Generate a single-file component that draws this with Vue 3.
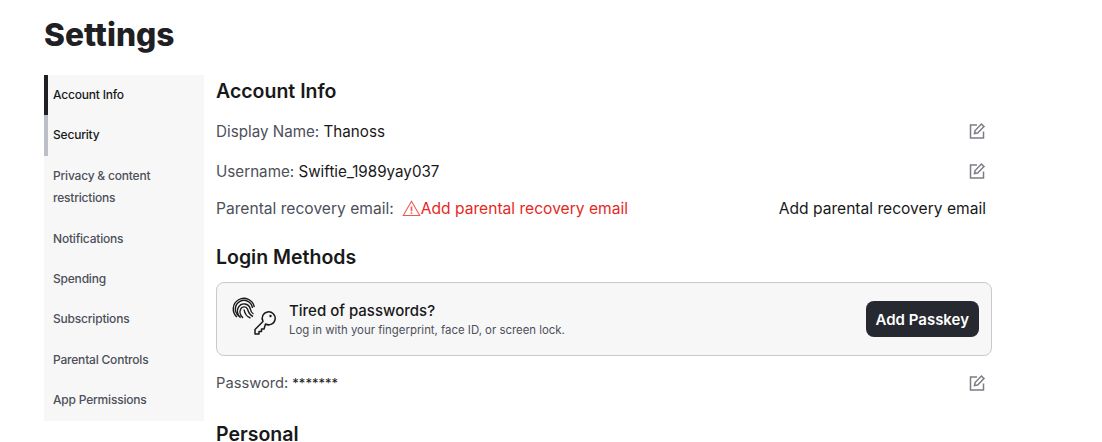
<template>
  <div class="page">
    <h1>Settings</h1>
    <div class="layout">
      <ul class="side-menu">
        <li
          v-for="item of menu"
          :key="item"
          :class="{ active: item === 'Account Info', hovered: item === 'Security' }"
        >
          {{ item }}
        </li>
      </ul>

      <div class="content">
        <h2 class="account-title">Account Info</h2>
        <div class="row">
          <span><span class="label">Display Name:</span> Thanoss</span>
          <svg class="edit" viewBox="0 0 18 18"><path d="M9 3H2.5v13h13V9.5" /><path d="M6.5 11.5l.6-3L13.4 2l2.6 2.6-6.4 6.4z" /></svg>
        </div>
        <div class="row">
          <span><span class="label">Username:</span> Swiftie_1989yay037</span>
          <svg class="edit" viewBox="0 0 18 18"><path d="M9 3H2.5v13h13V9.5" /><path d="M6.5 11.5l.6-3L13.4 2l2.6 2.6-6.4 6.4z" /></svg>
        </div>
        <div class="row email-row">
          <span class="email-left">
            <span class="label">Parental recovery email:</span>
            <span class="warn">
              <svg viewBox="0 0 18 18"><path d="M9 2.2L1.2 15.6h15.6z" /><path class="warn-mark" d="M9 7v4.6M9 12.6v1.4" /></svg>
              Add parental recovery email
            </span>
          </span>
          <span class="add-link">Add parental recovery email</span>
        </div>

        <h2 class="login-title">Login Methods</h2>
        <div class="passkey">
          <svg class="passkey-icon" viewBox="0 0 46 42">
            <g transform="translate(0 -2)">
              <g class="print">
                <path d="M5 21A10.6 10.6 0 1 1 22.3 11" />
                <path d="M7 20A8.6 8.6 0 1 1 20.5 12" />
                <path d="M8.6 21.6C5 19 4.500 14 6.600 11A6.400 6.400 0 0 1 18.200 12.500c.3 2 .8 4 3.300 5.500" />
                <path d="M11 22C7.500 19 7.500 15 9 12.500a3.800 3.800 0 0 1 6.600.7c.8 3 2 5.800 5.400 7.300" />
                <path d="M12 13.500c.6 3.500 2.500 7 6.500 8.500" />
              </g>
              <path class="key" d="M31 25.500L23 33.500V38H27V35.500H29.500V33H32L33.500 28A6.500 6.500 0 1 0 31 25.500z" />
              <circle class="key-hole" cx="38.500" cy="20" r="1.200" />
            </g>
          </svg>
          <div class="passkey-text">
            <div class="passkey-title">Tired of passwords?</div>
            <div class="passkey-sub">Log in with your fingerprint, face ID, or screen lock.</div>
          </div>
          <button>Add Passkey</button>
        </div>
        <div class="row password-row">
          <span><span class="label">Password:</span> <span class="stars">*******</span></span>
          <svg class="edit" viewBox="0 0 18 18"><path d="M9 3H2.5v13h13V9.5" /><path d="M6.5 11.5l.6-3L13.4 2l2.6 2.6-6.4 6.4z" /></svg>
        </div>

        <h2 class="personal-title">Personal</h2>
      </div>
    </div>
  </div>
</template>

<script setup>
const menu = [
  'Account Info',
  'Security',
  'Privacy & content restrictions',
  'Notifications',
  'Spending',
  'Subscriptions',
  'Parental Controls',
  'App Permissions',
];
</script>

<style>
html,
body {
  overflow: hidden;
  background: #fff;
}
</style>

<style scoped>
.page {
  width: 1102px;
  height: 442px;
  overflow: hidden;
  padding: 0 0 0 44px;
  box-sizing: border-box;
  font-family: Inter, "Liberation Sans", sans-serif;
  color: #191919;
}

h1 {
  margin: 0;
  padding-top: 15px;
  height: 75px;
  box-sizing: border-box;
  font-size: 31.7px;
  line-height: 40px;
  font-weight: 800;
  color: #1f2024;
}

.layout {
  display: flex;
  gap: 12px;
  align-items: flex-start;
}

.side-menu {
  width: 160px;
  margin: 0;
  padding: 0;
  list-style: none;
  background: #f7f7f8;
}

.side-menu li {
  padding: 9px 12px 9px 9px;
  font-size: 12px;
  letter-spacing: -0.2px;
  line-height: 22.4px;
  font-weight: 500;
  color: #4d4f59;
}

.side-menu .active {
  color: #191919;
  box-shadow: inset 4px 0 0 #1f2024;
}

.side-menu .hovered {
  color: #191919;
  box-shadow: inset 4px 0 0 #bcbec8;
}

.content {
  width: 776px;
}

h2 {
  margin: 0;
  font-size: 19.5px;
  line-height: 32px;
  font-weight: 600;
  color: #191919;
}

.account-title {
  height: 36px;
}

.row {
  display: flex;
  justify-content: space-between;
  align-items: center;
  height: 40px;
  padding-right: 6px;
  font-size: 15.2px;
  color: #191919;
}

.label {
  color: #4d4f59;
}

.stars {
  font-size: 13px;
}

.edit {
  width: 18px;
  height: 18px;
  fill: none;
  stroke: #7c7e87;
  stroke-width: 1.5;
}

.email-row {
  height: 34px;
  font-size: 15.6px;
}

.email-left {
  display: flex;
  align-items: center;
  gap: 8px;
}

.warn {
  display: flex;
  align-items: center;
  color: #e5281f;
}

.warn svg {
  width: 19px;
  height: 19px;
  fill: none;
  stroke: #ee5a52;
  stroke-width: 1;
}

.warn .warn-mark {
  stroke-width: 1.5;
}

.login-title {
  margin-top: 16px;
}

.passkey {
  display: flex;
  align-items: center;
  height: 74px;
  margin-top: 9px;
  padding: 0 12px 0 15px;
  box-sizing: border-box;
  background: #f7f7f8;
  border: 1px solid #c9cace;
  border-radius: 8px;
}

.passkey-icon {
  width: 46px;
  height: 42px;
  margin-right: 11px;
  flex-shrink: 0;
  overflow: visible;
}

.print path {
  fill: none;
  stroke: #191919;
  stroke-width: 1.4;
}

.key {
  fill: none;
  stroke: #191919;
  stroke-width: 1.5;
  stroke-linejoin: round;
}

.key-hole {
  fill: #191919;
}

.passkey-text {
  flex: 1;
  padding-top: 2px;
}

.passkey-title {
  font-size: 15px;
  line-height: 20px;
  font-weight: 500;
}

.passkey-sub {
  font-size: 11.4px;
  line-height: 18px;
  color: #4d4f59;
}

button {
  height: 36px;
  padding: 0 10px;
  border: none;
  border-radius: 8px;
  background: #272930;
  color: #fff;
  font-family: inherit;
  font-size: 15px;
  font-weight: 600;
}

.password-row {
  height: 54px;
  font-size: 14.7px;
}

.personal-title {
  margin-top: 8px;
}
</style>
